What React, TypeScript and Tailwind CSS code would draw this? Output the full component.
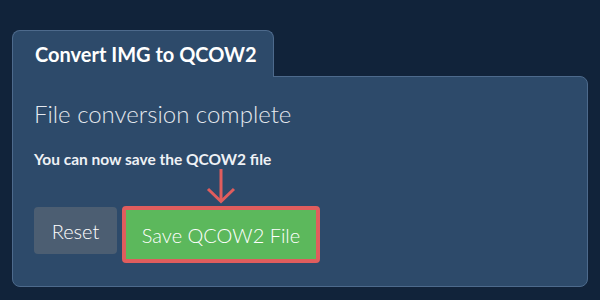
export default function App() {
    return (
        <div className="w-[600px] h-[300px] bg-[#11233a] pt-[30px] px-[12px] font-['Lato','Liberation_Sans',sans-serif] overflow-hidden">
            {/* Tab */}
            <div className="relative z-10 -mb-px w-[262px] h-[47px] bg-[#2d4a6a] border border-b-0 border-[#4d6a8c] rounded-t-[8px] flex items-center pl-[22px]">
                <span className="text-[20px] font-bold text-white leading-none">Convert IMG to QCOW2</span>
            </div>

            {/* Panel */}
            <div className="w-[576px] h-[211px] bg-[#2d4a6a] border border-[#4d6a8c] rounded-b-[8px] rounded-tr-[8px] pl-[21px] pt-[22px]">
                <h2 className="text-[24px] font-light text-[#e4e8ee] leading-[30px]">File conversion complete</h2>
                <p className="mt-[21px] text-[15.5px] font-bold text-[#eef1f5] leading-[18px]">You can now save the QCOW2 file</p>

                <div className="mt-[38px] flex items-start gap-[5px]">
                    <button className="mt-px w-[83px] h-[47px] rounded-[4px] bg-[#4c5e72] text-[20px] font-light text-white leading-none">
                        Reset
                    </button>
                    <div className="relative">
                        <svg
                            className="absolute left-1/2 -translate-x-1/2 -top-[38px]"
                            width="30"
                            height="36"
                            viewBox="0 0 30 36"
                            fill="none"
                            stroke="#e05d5d"
                            strokeWidth="3"
                        >
                            <path d="M15 1 V33" />
                            <path d="M2 21 L15 33.5 L28 21" />
                        </svg>
                        <button className="w-[198px] h-[57px] rounded-[4px] border-[4px] border-[#e05d5d] bg-[#5cb85c] text-[20px] font-light text-white leading-none">
                            Save QCOW2 File
                        </button>
                    </div>
                </div>
            </div>
        </div>
    );
}
